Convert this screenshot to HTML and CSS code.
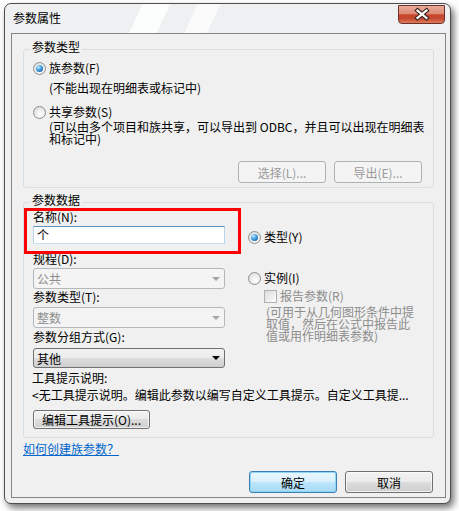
FILE: index.html
```html
<html>
  <head>
    <link rel="stylesheet" href="styles.css">
    <title>参数属性</title>
  </head>
  <body>
    <div class="window">
      <div class="titlebar">
        <div class="title">参数属性</div>
        <div class="close">
          <svg width="45" height="17" viewBox="0 0 45 17">
            <path d="M18.5 4.5 L27.5 12 M27.5 4.5 L18.5 12" stroke="#3a2420" stroke-width="4.4" stroke-linecap="square" fill="none"/>
            <path d="M18.5 4.5 L27.5 12 M27.5 4.5 L18.5 12" stroke="#ffffff" stroke-width="2.2" stroke-linecap="square" fill="none"/>
          </svg>
        </div>
      </div>
      <div class="client">
        <fieldset class="group group-type">
          <legend>参数类型</legend>
          <div class="option option-first"><span class="radio checked"></span><span>族参数(F)</span></div>
          <div class="note">(不能出现在明细表或标记中)</div>
          <div class="option option-shared"><span class="radio"></span><span>共享参数(S)</span></div>
          <div class="note note-tight">(可以由多个项目和族共享，可以导出到 ODBC，并且可以出现在明细表<br>和标记中)</div>
          <div class="group-buttons">
            <div class="btn disabled">选择(L)...</div>
            <div class="btn disabled">导出(E)...</div>
          </div>
        </fieldset>

        <fieldset class="group group-data">
          <legend>参数数据</legend>
          <div class="data-row">
            <div class="data-left">
              <div class="label">名称(N):</div>
              <div class="textbox">个</div>
              <div class="label label-gap">规程(D):</div>
              <div class="combo disabled"><span>公共</span><span class="arrow"></span></div>
              <div class="label label-type">参数类型(T):</div>
              <div class="combo disabled combo-type"><span>整数</span><span class="arrow"></span></div>
              <div class="label label-group">参数分组方式(G):</div>
              <div class="combo combo-group"><span>其他</span><span class="arrow"></span></div>
            </div>
            <div class="data-right">
              <div class="option option-kind"><span class="radio checked"></span><span>类型(Y)</span></div>
              <div class="option option-instance"><span class="radio"></span><span>实例(I)</span></div>
              <div class="check-row"><span class="checkbox"></span><span>报告参数(R)</span></div>
              <div class="hint">(可用于从几何图形条件中提<br>取值，然后在公式中报告此<br>值或用作明细表参数)</div>
            </div>
          </div>
          <div class="tip-label">工具提示说明:</div>
          <div class="tip-text">&lt;无工具提示说明。编辑此参数以编写自定义工具提示。自定义工具提...</div>
          <div class="btn btn-tip">编辑工具提示(O)...</div>
        </fieldset>

        <a class="help" href="#">如何创建族参数？</a>

        <div class="footer">
          <div class="btn btn-wide default">确定</div>
          <div class="btn btn-wide">取消</div>
        </div>
      </div>
    </div>
    <div class="highlight"></div>
  </body>
</html>
```

FILE: styles.css
```css
body {
  margin: 0;
  background: #fff;
  font-family: "Noto Sans CJK SC", sans-serif;
  font-size: 12px;
  color: #000;
}

.window {
  box-sizing: border-box;
  width: 447px;
  height: 501px;
  margin: 3px 0 0 4px;
  padding: 0 4px 5px 6px;
  border: 1px solid #4d4d4d;
  border-radius: 7px;
  background:
    linear-gradient(115deg, transparent 30%, rgba(255,255,255,0.85) 30%, rgba(255,255,255,0.85) 36%, transparent 36%, transparent 42%, rgba(255,255,255,0.7) 42%, rgba(255,255,255,0.7) 47%, transparent 47%) 0 0 / 100% 29px no-repeat,
    #eef0f2;
  box-shadow: 3px 4px 7px rgba(0, 0, 0, 0.55);
}

.titlebar {
  display: flex;
  height: 29px;
}

.title {
  padding: 8px 0 0 2px;
  line-height: 12px;
}

.close {
  box-sizing: border-box;
  width: 47px;
  height: 19px;
  margin: 1px 1px 0 auto;
  border: 1px solid #6b3128;
  border-radius: 0 0 4px 4px;
  background: linear-gradient(#e9aa9a 0%, #dd8b76 45%, #c8442c 52%, #c44a31 75%, #e07b5c 100%);
}

.close svg {
  display: block;
}

.client {
  box-sizing: border-box;
  height: 465px;
  padding: 0 11px;
  border: 1px solid #858585;
  background: #f0f0f0;
}

.group {
  margin: 0;
  padding: 0 11px 4px 9px;
  border: 1px solid #d5dfe5;
  border-radius: 3px;
  min-width: 0;
}

.group legend {
  margin-left: -3px;
  padding: 0 2px 5px;
  line-height: 12px;
}

.group-type {
  margin-top: 7px;
}

.group-data {
  margin-top: 6px;
  padding-bottom: 8px;
}

.option {
  display: flex;
  align-items: center;
  line-height: 14px;
  white-space: nowrap;
}

.option-first {
  margin-top: 3px;
}

.option-shared {
  margin-top: 10px;
}

.radio {
  box-sizing: border-box;
  display: flex;
  align-items: center;
  justify-content: center;
  width: 13px;
  height: 13px;
  margin-right: 3px;
  border: 1px solid #8e8f8f;
  border-radius: 50%;
  background: radial-gradient(circle at 60% 65%, #ffffff, #d6d6d6);
}

.radio.checked::after {
  content: "";
  width: 7px;
  height: 7px;
  border-radius: 50%;
  background: radial-gradient(circle at 35% 30%, #c9ecff 0, #4aa7e8 40%, #0e4e92 95%);
}

.note {
  margin: 6px 0 0 16px;
  line-height: 14px;
  white-space: nowrap;
}

.note-tight {
  margin-top: 2px;
  line-height: 12px;
}

.group-buttons {
  display: flex;
  justify-content: flex-end;
  gap: 8px;
  margin-top: 16px;
}

.btn {
  box-sizing: border-box;
  display: flex;
  align-items: center;
  justify-content: center;
  width: 88px;
  height: 22px;
  border: 1px solid #707070;
  border-radius: 3px;
  background: linear-gradient(#f2f2f2 0%, #ebebeb 50%, #dddddd 50%, #cfcfcf 100%);
  box-shadow: inset 0 0 0 1px rgba(255, 255, 255, 0.7);
  white-space: nowrap;
}

.btn.disabled {
  border-color: #adb2b5;
  background: #f4f4f4;
  box-shadow: none;
  color: #9a9a9a;
}

.data-row {
  display: flex;
}

.data-left {
  width: 192px;
}

.data-right {
  margin-left: 23px;
}

.label {
  line-height: 12px;
  white-space: nowrap;
}

.label-gap {
  margin-top: 9px;
}

.label-type {
  margin-top: 2px;
}

.label-group {
  margin-top: 3px;
}

.textbox {
  box-sizing: border-box;
  height: 18px;
  margin-top: 3px;
  padding-left: 3px;
  border: 1px solid;
  border-color: #5794bf #b7d5ea #c7e2f1 #b7d5ea;
  background: #fff;
  line-height: 16px;
}

.combo {
  box-sizing: border-box;
  display: flex;
  align-items: center;
  justify-content: space-between;
  height: 21px;
  margin-top: 3px;
  padding: 0 3px 0 3px;
  border: 1px solid #707070;
  border-radius: 3px;
  background: linear-gradient(#f2f2f2 0%, #ebebeb 50%, #dddddd 50%, #cfcfcf 100%);
}

.combo .arrow {
  width: 0;
  height: 0;
  margin-right: 1px;
  border-left: 4px solid transparent;
  border-right: 4px solid transparent;
  border-top: 4px solid #000;
}

.combo.disabled {
  border-color: #b4b8bb;
  background: #f4f4f4;
  color: #8c8c8c;
}

.combo.disabled .arrow {
  border-top-color: #a5a5a5;
}

.combo-type {
  margin-top: 4px;
}

.combo-group {
  height: 20px;
  margin-top: 5px;
}

.option-kind {
  margin-top: 19px;
}

.option-instance {
  margin-top: 27px;
}

.check-row {
  display: flex;
  align-items: center;
  margin: 4px 0 0 16px;
  line-height: 14px;
  color: #8c8c8c;
  white-space: nowrap;
}

.checkbox {
  box-sizing: border-box;
  width: 13px;
  height: 13px;
  margin-right: 3px;
  border: 1px solid #b1b1b1;
  background: linear-gradient(135deg, #dcdcdc, #fdfdfd);
}

.hint {
  margin: 3px 0 0 18px;
  line-height: 12px;
  color: #8c8c8c;
  white-space: nowrap;
}

.tip-label {
  margin: 4px 0 0 -1px;
  line-height: 12px;
}

.tip-text {
  margin: 5px 0 0 -1px;
  line-height: 12px;
  white-space: nowrap;
}

.btn-tip {
  width: 117px;
  height: 19px;
  margin-top: 9px;
}

.help {
  display: inline-block;
  margin-top: 5px;
  line-height: 12px;
  color: #0066cc;
}

.footer {
  display: flex;
  justify-content: flex-end;
  gap: 8px;
  margin: 16px 1px 0 0;
}

.btn.default {
  border-color: #3c7fb1;
  background: linear-gradient(#eaf6fd 0%, #d9f0fc 50%, #bee6fd 50%, #a7d9f5 100%);
  box-shadow: inset 0 0 0 1px #8fd6f6;
}

.highlight {
  position: absolute;
  left: 24px;
  top: 208px;
  box-sizing: border-box;
  width: 217px;
  height: 46px;
  border: 3px solid #ff0000;
}
```
